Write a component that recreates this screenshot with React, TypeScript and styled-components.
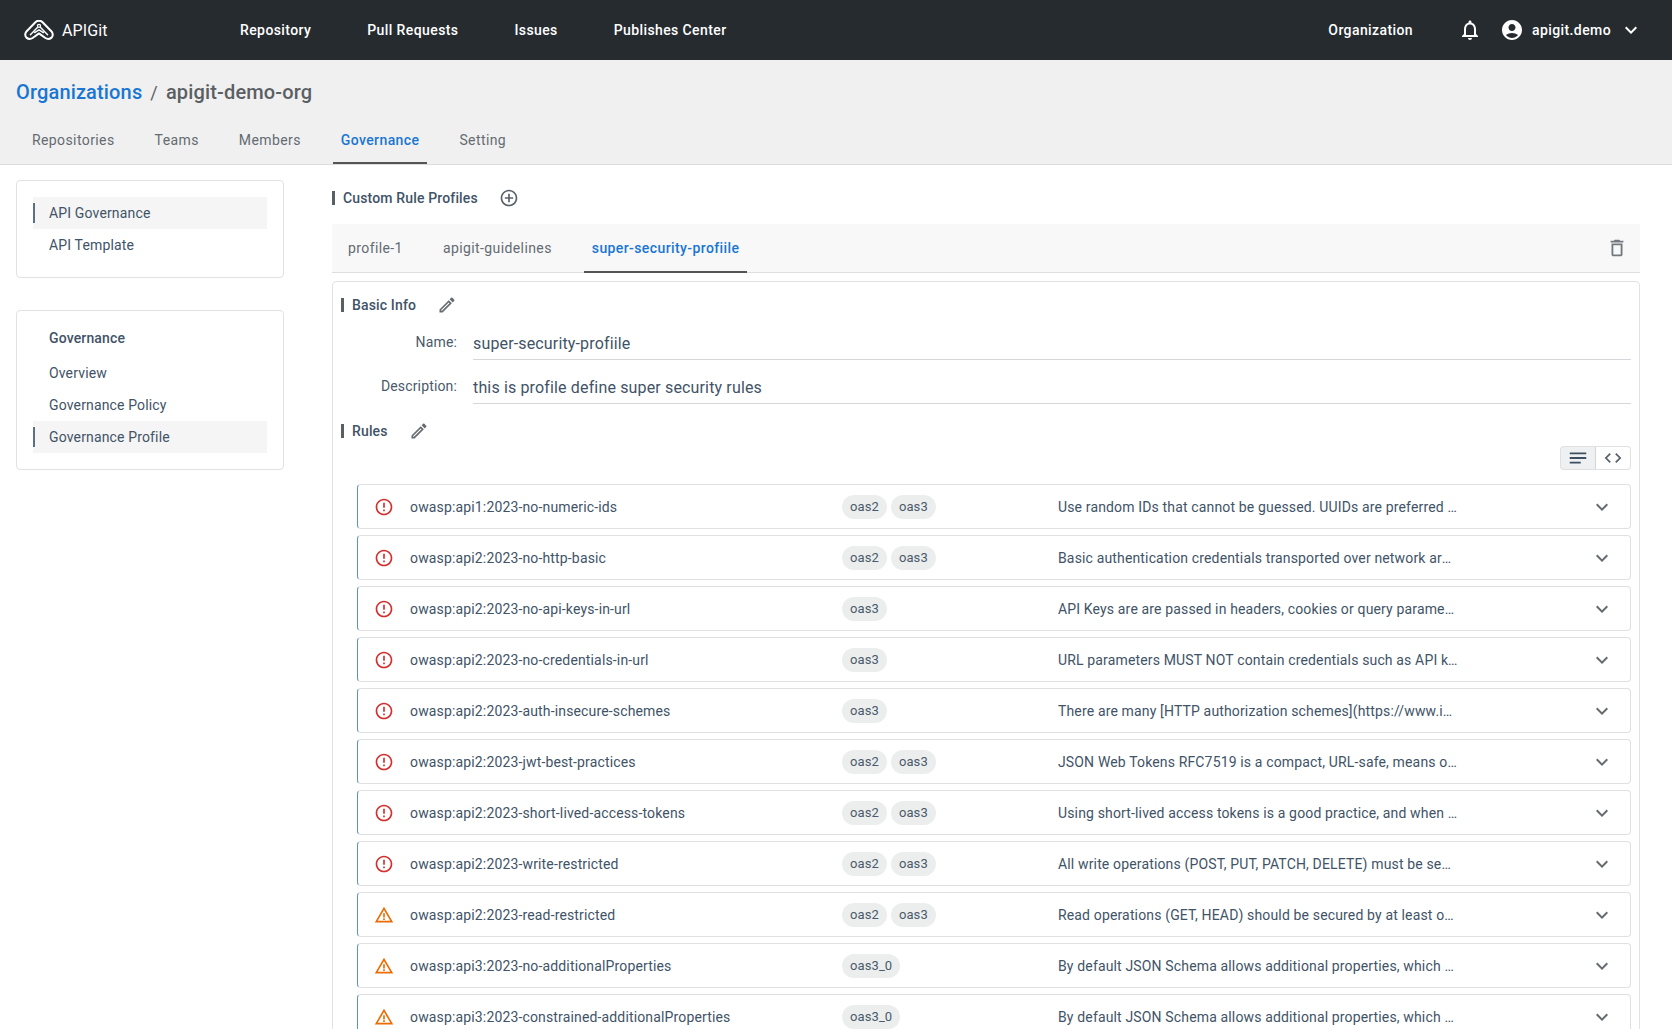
import React from "react";
import styled, { createGlobalStyle } from "styled-components";
import {
  MdOutlineNotifications,
  MdAccountCircle,
  MdKeyboardArrowDown,
  MdOutlineDelete,
  MdOutlineCreate,
  MdErrorOutline,
  MdWarningAmber,
  MdAddCircleOutline,
  MdNotes,
  MdCode,
} from "react-icons/md";

const Global = createGlobalStyle`
  html, body { margin: 0; padding: 0; height: 100%; overflow: hidden; background: #fff; }
  body { font-family: Roboto, "Liberation Sans", sans-serif; }
  #root { height: 100%; }
  * { box-sizing: border-box; }
`;

const Page = styled.div`
  height: 1029px;
  overflow: hidden;
  letter-spacing: 0.15px;
  color: #415367;
  font-size: 14px;
`;

const TopBar = styled.header`
  height: 60px;
  background: #262b30;
  color: #fff;
  display: flex;
  align-items: center;
  padding-left: 24px;
`;

const Brand = styled.div`
  display: flex;
  align-items: center;
  gap: 8px;
  width: 216px;
  font-size: 16px;
  letter-spacing: 0.1px;
`;

const TopNav = styled.nav`
  display: flex;
  gap: 56px;
  flex: 1;
`;

const TopLink = styled.a`
  font-weight: 500;
  font-size: 14px;
  letter-spacing: 0.4px;
`;

const TopRight = styled.div`
  display: flex;
  align-items: center;
  font-weight: 500;
  letter-spacing: 0.4px;
`;

const OrgLink = styled.span`
  margin-right: 45px;
`;

const IconSlot = styled.span<{ $size: number; $mr?: number; $ml?: number; $color?: string }>`
  display: inline-flex;
  align-items: center;
  justify-content: center;
  flex: none;
  width: ${(p) => p.$size}px;
  height: ${(p) => p.$size}px;
  margin-right: ${(p) => p.$mr ?? 0}px;
  margin-left: ${(p) => p.$ml ?? 0}px;
  color: ${(p) => p.$color ?? "inherit"};
  svg { width: 100%; height: 100%; display: block; }
`;

const SubHeader = styled.div`
  height: 105px;
  background: #f0f0f0;
  border-bottom: 1px solid #dcdcdc;
  padding: 0 16px;
  display: flex;
  flex-direction: column;
`;

const Crumbs = styled.div`
  display: flex;
  align-items: center;
  height: 64px;
  font-size: 20px;
  font-weight: 500;
  letter-spacing: 0.15px;
  color: #5b5f64;
`;

const CrumbLink = styled.a`
  color: #1976d2;
`;

const CrumbSep = styled.span`
  margin: 0 8px;
  font-weight: 400;
  font-size: 18px;
`;

const MainTabs = styled.div`
  display: flex;
  gap: 24px;
  height: 40px;
  padding-left: 8px;
`;

const MainTab = styled.a<{ $active?: boolean }>`
  padding: 0 8px 6px;
  display: flex;
  align-items: center;
  height: 40px;
  color: ${(p) => (p.$active ? "#1976d2" : "#646b72")};
  font-weight: ${(p) => (p.$active ? 500 : 400)};
  letter-spacing: 0.4px;
  border-bottom: 2px solid ${(p) => (p.$active ? "#555" : "transparent")};
`;

const Body = styled.div`
  display: flex;
  gap: 48px;
  padding: 15px 32px 0 16px;
`;

const Side = styled.aside`
  width: 268px;
  flex: none;
  display: flex;
  flex-direction: column;
  gap: 32px;
`;

const SideCard = styled.div<{ $pt: number }>`
  border: 1px solid #e2e2e2;
  border-radius: 4px;
  padding: ${(p) => p.$pt}px 16px 16px;
`;

const SideHead = styled.div`
  height: 32px;
  padding-left: 16px;
  display: flex;
  align-items: center;
  font-weight: 500;
  margin-bottom: 3px;
`;

const SideItem = styled.div<{ $active?: boolean }>`
  height: 32px;
  display: flex;
  align-items: center;
  padding-left: 16px;
  position: relative;
  background: ${(p) => (p.$active ? "#f5f5f5" : "transparent")};
  ${(p) =>
    p.$active
      ? `&::before { content: ""; position: absolute; left: 0; top: 6px; bottom: 6px; width: 2px; background: #5c6f85; }`
      : ""}
`;

const Main = styled.main`
  flex: 1;
  min-width: 0;
`;

const SectionTitle = styled.div<{ $h: number }>`
  display: flex;
  align-items: center;
  height: ${(p) => p.$h}px;
  font-weight: 500;
  &::before {
    content: "";
    flex: none;
    width: 3px;
    height: 14px;
    background: #5a5f66;
    margin-right: 8px;
  }
`;

const TitleText = styled.span`
  margin-right: 21px;
`;

const RulesTitle = styled(SectionTitle)`
  margin-top: 3px;
`;

const ProfileBar = styled.div`
  margin-top: 8px;
  height: 49px;
  background: #f8f8f8;
  border-bottom: 1px solid #dedede;
  display: flex;
  align-items: stretch;
  justify-content: space-between;
  padding-right: 12px;
`;

const ProfileTabs = styled.div`
  display: flex;
  gap: 24px;
  padding-left: 8px;
`;

const ProfileTab = styled.a<{ $active?: boolean }>`
  padding: 0 8px;
  display: flex;
  align-items: center;
  color: ${(p) => (p.$active ? "#1976d2" : "#646b72")};
  font-weight: ${(p) => (p.$active ? 500 : 400)};
  letter-spacing: 0.4px;
  margin-bottom: -1px;
  border-bottom: 2px solid ${(p) => (p.$active ? "#555" : "transparent")};
`;

const TrashWrap = styled.div`
  display: flex;
  align-items: center;
  color: #73787e;
`;

const Panel = styled.section`
  margin-top: 8px;
  border: 1px solid #e2e2e2;
  border-radius: 4px;
  padding: 3px 8px 0;
  height: 800px;
`;

const Field = styled.div`
  display: flex;
  align-items: flex-start;
  height: 44px;
`;

const FieldLabel = styled.div`
  width: 116px;
  text-align: right;
  padding-top: 9px;
  color: #4a5a6b;
`;

const FieldValue = styled.div`
  flex: 1;
  margin-left: 16px;
  border-bottom: 1px solid #d5d7da;
  font-size: 16px;
  letter-spacing: 0.15px;
  padding-top: 9px;
  height: 35px;
`;

const Toolbar = styled.div`
  display: flex;
  justify-content: flex-end;
  height: 24px;
`;

const ToggleBtn = styled.button<{ $active?: boolean; $w: number }>`
  width: ${(p) => p.$w}px;
  height: 24px;
  padding: 0;
  margin: 0;
  display: flex;
  align-items: center;
  justify-content: center;
  border: 1px solid #e0e0e0;
  background: ${(p) => (p.$active ? "#eef0f1" : "#fff")};
  color: ${(p) => (p.$active ? "#3d4f63" : "#565f69")};
  &:first-child { border-radius: 4px 0 0 4px; border-right: 1px solid #d5d5d5; }
  &:last-child { border-radius: 0 4px 4px 0; border-left: 0; }
`;

const RuleList = styled.div`
  margin: 14px 0 0 16px;
  display: flex;
  flex-direction: column;
  gap: 6px;
`;

const RuleRow = styled.div`
  height: 45px;
  flex: none;
  display: flex;
  align-items: center;
  border: 1px solid #e0e0e0;
  border-left: 1px solid #5c8fd0;
  border-radius: 4px;
  padding-left: 16px;
`;

const RuleName = styled.div`
  width: 432px;
  flex: none;
  margin-left: 16px;
  letter-spacing: 0.15px;
`;

const Chips = styled.div`
  width: 216px;
  flex: none;
  display: flex;
  gap: 4px;
`;

const Chip = styled.span`
  height: 24px;
  padding: 0 8px;
  border-radius: 12px;
  background: #eceeee;
  font-size: 13px;
  letter-spacing: 0.1px;
  display: inline-flex;
  align-items: center;
  color: #4a5a6b;
`;

const RuleDesc = styled.div`
  width: 400px;
  flex: none;
  white-space: nowrap;
  overflow: hidden;
  text-overflow: ellipsis;
`;

const RuleCaret = styled.div`
  margin-left: auto;
  margin-right: 16px;
  display: flex;
  color: #666b70;
`;

const LogoMark = () => (
  <svg width="30" height="20" viewBox="0 0 30 20" fill="none" stroke="#fff" strokeWidth="2" strokeLinejoin="round" strokeLinecap="round">
    <path d="M2.2 11.8 L11.4 2.2 Q15 -0.8 18.6 2.2 L27.8 11.8 Q29.8 15 27.6 17.6 Q24.6 20 21.4 18 L15 13.4 L8.6 18 Q5.4 20 2.4 17.6 Q0.2 15 2.2 11.8 Z" />
    <path d="M6.4 14.8 L13.4 7.4 M16.6 7.4 L23.6 14.8 M10.6 12.6 L15 9.8 L19.4 12.6" strokeWidth="1.4" />
    <circle cx="15" cy="5.8" r="1.5" strokeWidth="1.3" />
  </svg>
);

type Rule = { name: string; level: "error" | "warn"; chips: string[]; desc: string };

const rules: Rule[] = [
  { name: "owasp:api1:2023-no-numeric-ids", level: "error", chips: ["oas2", "oas3"], desc: "Use random IDs that cannot be guessed. UUIDs are preferred but any other random string will do." },
  { name: "owasp:api2:2023-no-http-basic", level: "error", chips: ["oas2", "oas3"], desc: "Basic authentication credentials transported over network are more susceptible to interception." },
  { name: "owasp:api2:2023-no-api-keys-in-url", level: "error", chips: ["oas3"], desc: "API Keys are are passed in headers, cookies or query parameters to access APIs." },
  { name: "owasp:api2:2023-no-credentials-in-url", level: "error", chips: ["oas3"], desc: "URL parameters MUST NOT contain credentials such as API key, password, or secret." },
  { name: "owasp:api2:2023-auth-insecure-schemes", level: "error", chips: ["oas3"], desc: "There are many [HTTP authorization schemes](https://www.iana.org/assignments/http-authschemes/)" },
  { name: "owasp:api2:2023-jwt-best-practices", level: "error", chips: ["oas2", "oas3"], desc: "JSON Web Tokens RFC7519 is a compact, URL-safe, means of representing claims." },
  { name: "owasp:api2:2023-short-lived-access-tokens", level: "error", chips: ["oas2", "oas3"], desc: "Using short-lived access tokens is a good practice, and when using OAuth 2 this is done." },
  { name: "owasp:api2:2023-write-restricted", level: "error", chips: ["oas2", "oas3"], desc: "All write operations (POST, PUT, PATCH, DELETE) must be secured by at least one scheme." },
  { name: "owasp:api2:2023-read-restricted", level: "warn", chips: ["oas2", "oas3"], desc: "Read operations (GET, HEAD) should be secured by at least one security scheme." },
  { name: "owasp:api3:2023-no-additionalProperties", level: "warn", chips: ["oas3_0"], desc: "By default JSON Schema allows additional properties, which can potentially lead to mass assignment." },
  { name: "owasp:api3:2023-constrained-additionalProperties", level: "warn", chips: ["oas3_0"], desc: "By default JSON Schema allows additional properties, which can potentially lead to mass assignment." },
];

export default function App() {
  return (
    <Page>
      <Global />
      <TopBar>
        <Brand>
          <LogoMark />
          <span>APIGit</span>
        </Brand>
        <TopNav>
          <TopLink>Repository</TopLink>
          <TopLink>Pull Requests</TopLink>
          <TopLink>Issues</TopLink>
          <TopLink>Publishes Center</TopLink>
        </TopNav>
        <TopRight>
          <OrgLink>Organization</OrgLink>
          <IconSlot $size={24} $mr={18}><MdOutlineNotifications /></IconSlot>
          <IconSlot $size={24} $mr={8}><MdAccountCircle /></IconSlot>
          <span>apigit.demo</span>
          <IconSlot $size={24} $ml={8} $mr={29}><MdKeyboardArrowDown /></IconSlot>
        </TopRight>
      </TopBar>
      <SubHeader>
        <Crumbs>
          <CrumbLink>Organizations</CrumbLink>
          <CrumbSep>/</CrumbSep>
          <span>apigit-demo-org</span>
        </Crumbs>
        <MainTabs>
          <MainTab>Repositories</MainTab>
          <MainTab>Teams</MainTab>
          <MainTab>Members</MainTab>
          <MainTab $active>Governance</MainTab>
          <MainTab>Setting</MainTab>
        </MainTabs>
      </SubHeader>
      <Body>
        <Side>
          <SideCard $pt={16}>
            <SideItem $active>API Governance</SideItem>
            <SideItem>API Template</SideItem>
          </SideCard>
          <SideCard $pt={11}>
            <SideHead>Governance</SideHead>
            <SideItem>Overview</SideItem>
            <SideItem>Governance Policy</SideItem>
            <SideItem $active>Governance Profile</SideItem>
          </SideCard>
        </Side>
        <Main>
          <SectionTitle $h={36}>
            <TitleText>Custom Rule Profiles</TitleText>
            <IconSlot $size={20} $color="#5a6068"><MdAddCircleOutline /></IconSlot>
          </SectionTitle>
          <ProfileBar>
            <ProfileTabs>
              <ProfileTab>profile-1</ProfileTab>
              <ProfileTab>apigit-guidelines</ProfileTab>
              <ProfileTab $active>super-security-profiile</ProfileTab>
            </ProfileTabs>
            <TrashWrap>
              <IconSlot $size={22}><MdOutlineDelete /></IconSlot>
            </TrashWrap>
          </ProfileBar>
          <Panel>
            <SectionTitle $h={40}>
              <TitleText>Basic Info</TitleText>
              <IconSlot $size={20} $color="#666b70"><MdOutlineCreate /></IconSlot>
            </SectionTitle>
            <Field>
              <FieldLabel>Name:</FieldLabel>
              <FieldValue>super-security-profiile</FieldValue>
            </Field>
            <Field>
              <FieldLabel>Description:</FieldLabel>
              <FieldValue>this is profile define super security rules</FieldValue>
            </Field>
            <RulesTitle $h={30}>
              <TitleText>Rules</TitleText>
              <IconSlot $size={20} $color="#666b70"><MdOutlineCreate /></IconSlot>
            </RulesTitle>
            <Toolbar>
              <ToggleBtn $active $w={36}><IconSlot $size={22}><MdNotes /></IconSlot></ToggleBtn>
              <ToggleBtn $w={35}><IconSlot $size={20}><MdCode /></IconSlot></ToggleBtn>
            </Toolbar>
            <RuleList>
              {rules.map((r) => (
                <RuleRow key={r.name}>
                  <IconSlot $size={20} $color={r.level === "error" ? "#d32f2f" : "#ed6c02"}>
                    {r.level === "error" ? <MdErrorOutline /> : <MdWarningAmber />}
                  </IconSlot>
                  <RuleName>{r.name}</RuleName>
                  <Chips>
                    {r.chips.map((c) => (
                      <Chip key={c}>{c}</Chip>
                    ))}
                  </Chips>
                  <RuleDesc>{r.desc}</RuleDesc>
                  <RuleCaret>
                    <IconSlot $size={24}><MdKeyboardArrowDown /></IconSlot>
                  </RuleCaret>
                </RuleRow>
              ))}
            </RuleList>
          </Panel>
        </Main>
      </Body>
    </Page>
  );
}
